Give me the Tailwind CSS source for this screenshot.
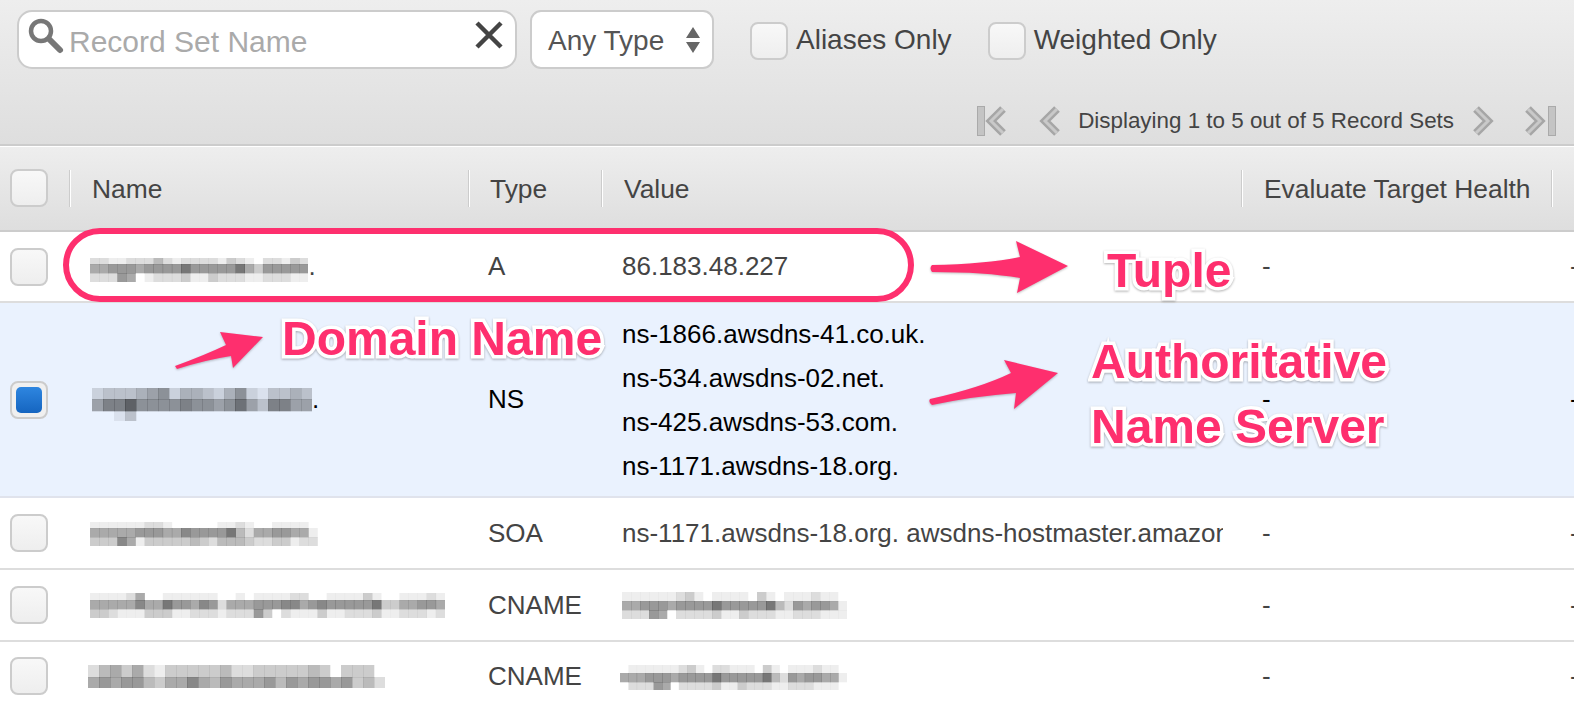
<!DOCTYPE html>
<html lang="en">
<head>
    <meta charset="UTF-8">
    <title>Record Sets</title>
    <script src="https://cdn.jsdelivr.net/npm/@tailwindcss/browser@4"></script>
</head>
<body class="relative w-screen h-screen overflow-hidden bg-white text-[#444] font-['Liberation_Sans',Arial,sans-serif] flex flex-col">

    <!-- Toolbar -->
    <div class="h-[146px] shrink-0 flex flex-col border-b-2 border-[#ccc] bg-gradient-to-b from-[#eeeeee] to-[#dedede]">
        <div class="flex items-start pt-[10px] pl-[17px]">
            <div class="relative w-[500px] h-[59px] bg-white border-2 border-[#ccc] rounded-[15px] flex items-center pl-[50px] pr-[12px]">
                <svg class="absolute left-[8px] top-[5px]" width="38" height="38" viewBox="0 0 38 38" fill="none">
                    <circle cx="14" cy="14" r="10" stroke="#777" stroke-width="4.5"/>
                    <path d="M22 22 L33 33" stroke="#777" stroke-width="6" stroke-linecap="round"/>
                </svg>
                <span class="text-[30px] text-[#aaa] mt-[3px] flex-1">Record Set Name</span>
                <svg class="mb-[9px]" width="28" height="28" viewBox="0 0 28 28" fill="none">
                    <path d="M2 2 L26 26 M26 2 L2 26" stroke="#444" stroke-width="4.5"/>
                </svg>
            </div>
            <div class="ml-[13px] w-[184px] h-[59px] bg-white border-2 border-[#ccc] rounded-[11px] flex items-center pl-[16px] pr-[12px] justify-between">
                <span class="text-[28px] text-[#555] mt-[2px]">Any Type</span>
                <svg width="14" height="26" viewBox="0 0 14 26" fill="#666">
                    <path d="M7 0 L14 11 L0 11 Z M0 15 L14 15 L7 26 Z"/>
                </svg>
            </div>
            <div class="ml-[36px] mt-[11px] flex items-center">
                <div class="w-[38px] h-[38px] rounded-[8px] border-2 border-[#ccc] bg-gradient-to-b from-[#f8f8f8] to-[#eee]"></div>
                <span class="ml-[8px] -mt-[2px] text-[28px]">Aliases Only</span>
            </div>
            <div class="ml-[36px] mt-[11px] flex items-center">
                <div class="w-[38px] h-[38px] rounded-[8px] border-2 border-[#ccc] bg-gradient-to-b from-[#f8f8f8] to-[#eee]"></div>
                <span class="ml-[8px] -mt-[2px] text-[28px]">Weighted Only</span>
            </div>
        </div>
        <div class="mt-auto mb-[6px] pr-[18px] flex items-center justify-end">
            <svg width="30" height="30" viewBox="0 0 30 30" fill="none">
                <rect x="0.5" y="0.5" width="7" height="29" fill="#c4c4c4" stroke="#aaa"/>
                <path d="M26 3 L14 15 L26 27" stroke="#a6a6a6" stroke-width="8"/>
                <path d="M26 3 L14 15 L26 27" stroke="#c9c9c9" stroke-width="3"/>
            </svg>
            <svg class="ml-[32px]" width="22" height="30" viewBox="0 0 22 30" fill="none">
                <path d="M18 3 L6 15 L18 27" stroke="#a6a6a6" stroke-width="8"/>
                <path d="M18 3 L6 15 L18 27" stroke="#c9c9c9" stroke-width="3"/>
            </svg>
            <span class="ml-[17px] text-[22.4px]">Displaying 1 to 5 out of 5 Record Sets</span>
            <svg class="ml-[18px]" width="22" height="30" viewBox="0 0 22 30" fill="none">
                <path d="M4 3 L16 15 L4 27" stroke="#a6a6a6" stroke-width="8"/>
                <path d="M4 3 L16 15 L4 27" stroke="#c9c9c9" stroke-width="3"/>
            </svg>
            <svg class="ml-[30px]" width="32" height="30" viewBox="0 0 32 30" fill="none">
                <path d="M4 3 L16 15 L4 27" stroke="#a6a6a6" stroke-width="8"/>
                <path d="M4 3 L16 15 L4 27" stroke="#c9c9c9" stroke-width="3"/>
                <rect x="24.5" y="0.5" width="7" height="29" fill="#c4c4c4" stroke="#aaa"/>
            </svg>
        </div>
    </div>

    <!-- Table header -->
    <div class="h-[86px] shrink-0 grid grid-cols-[69px_399px_133px_640px_310px_1fr] items-center border-b-2 border-[#ccc] bg-gradient-to-b from-[#eeeeee] to-[#dedede] text-[26.4px] shadow-[inset_0_1px_0_white]">
        <div class="pl-[10px]"><div class="w-[38px] h-[38px] rounded-[8px] border-2 border-[#ccc] bg-gradient-to-b from-[#f8f8f8] to-[#eee]"></div></div>
        <div class="h-[37px] flex items-center pt-[4px] pl-[22px] border-l border-[#ccc] shadow-[inset_1px_0_0_white]">Name</div>
        <div class="h-[37px] flex items-center pt-[4px] pl-[21px] border-l border-[#ccc] shadow-[inset_1px_0_0_white]">Type</div>
        <div class="h-[37px] flex items-center pt-[4px] pl-[22px] border-l border-[#ccc] shadow-[inset_1px_0_0_white]">Value</div>
        <div class="h-[37px] flex items-center pt-[4px] pl-[22px] border-l border-[#ccc] shadow-[inset_1px_0_0_white] whitespace-nowrap">Evaluate Target Health</div>
        <div class="h-[37px] border-l border-[#ccc] shadow-[inset_1px_0_0_white]"></div>
    </div>

    <!-- Rows -->
    <div class="h-[71px] shrink-0 grid grid-cols-[70px_398px_133px_640px_311px_1fr] items-center border-b-2 border-[#ddd] text-[26px]">
        <div class="pl-[10px]"><div class="w-[38px] h-[38px] rounded-[8px] border-2 border-[#ccc] bg-gradient-to-b from-[#f8f8f8] to-[#eee]"></div></div>
        <div class="pl-[20px] flex items-center">
            <svg class="pixels translate-y-[3px]" data-rows="ddeedddbdeddddecdefddecd|aa999a99997999997ac99999|ddd9afedddceecdddeedddee" data-heights="6,9,9" data-cell="9.1"></svg><span>.</span>
        </div>
        <div class="pl-[20px]">A</div>
        <div class="pl-[21px]">86.183.48.227</div>
        <div class="pl-[21px]">-</div>
        <div class="pl-[18px]">-</div>
    </div>

    <div class="h-[195px] shrink-0 grid grid-cols-[70px_398px_133px_640px_311px_1fr] items-center border-b-2 border-[#e0e3ec] bg-[#eaf2fe] text-black text-[26px]">
        <div class="pl-[10px]">
            <div class="w-[38px] h-[38px] rounded-[8px] border-2 border-[#ccc] bg-[#f0f0f0] flex items-center justify-center">
                <div class="w-[26px] h-[26px] rounded-[5px] bg-gradient-to-b from-[#2e86e0] to-[#1565c0]"></div>
            </div>
        </div>
        <div class="pl-[22px] flex items-center">
            <svg class="pixels translate-y-[5px]" data-rows="dcccba9dbbcdb9deccbc|a8869999899a97ac88aa|ffecffffffffffffffff" data-heights="11,12,10" data-cell="11"></svg><span>.</span>
        </div>
        <div class="pl-[20px]">NS</div>
        <div class="pl-[21px] leading-[44px]">
            <div>ns-1866.awsdns-41.co.uk.</div>
            <div>ns-534.awsdns-02.net.</div>
            <div>ns-425.awsdns-53.com.</div>
            <div>ns-1171.awsdns-18.org.</div>
        </div>
        <div class="pl-[21px]">-</div>
        <div class="pl-[18px]">-</div>
    </div>

    <div class="h-[72px] shrink-0 grid grid-cols-[70px_398px_133px_640px_311px_1fr] items-center border-b-2 border-[#ddd] text-[26px]">
        <div class="pl-[10px]"><div class="w-[38px] h-[38px] rounded-[8px] border-2 border-[#ccc] bg-gradient-to-b from-[#f8f8f8] to-[#eee]"></div></div>
        <div class="pl-[20px]">
            <svg class="pixels translate-y-[1px]" data-rows="eeeeeeddefffffeedeffeeeef|aaaaa999aa899997bdaa99aae|ccc8aecccccbcdbbbcddccedd" data-heights="6,9,9" data-cell="9.1"></svg>
        </div>
        <div class="pl-[20px]">SOA</div>
        <div class="pl-[21px]"><div class="w-[601px] overflow-hidden whitespace-nowrap">ns-1171.awsdns-18.org. awsdns-hostmaster.amazon.com. 1 7200 900 1209600 86400</div></div>
        <div class="pl-[21px]">-</div>
        <div class="pl-[18px]">-</div>
    </div>

    <div class="h-[72px] shrink-0 grid grid-cols-[70px_398px_133px_640px_311px_1fr] items-center border-b-2 border-[#ddd] text-[26px]">
        <div class="pl-[10px]"><div class="w-[38px] h-[38px] rounded-[8px] border-2 border-[#ccc] bg-gradient-to-b from-[#f8f8f8] to-[#eee]"></div></div>
        <div class="pl-[20px]">
            <svg class="pixels" data-rows="eeeedaffeeeeeeffefeeeeddffeeeeceffeeede|aaaaa8aa799a89daaa99988a98999997ccaa99a|ccdeeeccceedddeddd9cfdeeeceedddceeddded" data-heights="7,9,9" data-cell="9.1"></svg>
        </div>
        <div class="pl-[20px]">CNAME</div>
        <div class="pl-[21px]">
            <svg class="pixels" data-rows="eeeeeedcefeeeefcefeeedee|aa999a99997999997bd9a99ae|ddd9afddddceecdddeedddeee" data-heights="9,9,9" data-cell="9"></svg>
        </div>
        <div class="pl-[21px]">-</div>
        <div class="pl-[18px]">-</div>
    </div>

    <div class="flex-1 grid grid-cols-[70px_398px_133px_640px_311px_1fr] items-center text-[26px]">
        <div class="pl-[10px]"><div class="w-[38px] h-[38px] rounded-[8px] border-2 border-[#ccc] bg-gradient-to-b from-[#f8f8f8] to-[#eee]"></div></div>
        <div class="pl-[18px]">
            <svg class="pixels" data-rows="dbacadecccccbddcccccbcfcccf|a9a99bcaa8ab9aaa9b9a99a9cbd" data-heights="12,11" data-cell="11"></svg>
        </div>
        <div class="pl-[20px]">CNAME</div>
        <div class="pl-[19px]">
            <svg class="pixels translate-y-[1px]" data-rows="feeeeeedcefddeeefcefeeedee|aaa999a99997999997bd9a99aae|fddd9afddddceecdddeedddeee" data-heights="8,9,8" data-cell="8.4"></svg>
        </div>
        <div class="pl-[21px]">-</div>
        <div class="pl-[18px]">-</div>
    </div>

    <!-- Annotations drawn on top of the screenshot -->
    <div class="absolute left-[63px] top-[228px] w-[851px] h-[74px] border-[6px] border-[#fe2f6e] rounded-[37px]"></div>

    <svg class="absolute left-0 top-0 pointer-events-none drop-shadow-[0_1px_1px_rgba(0,0,0,0.25)]" width="1574" height="710" fill="#fe2f6e">
        <path d="M932 265 Q985 264 1020 257 L1016 241 L1068 266 L1017 293 L1020 278 Q985 272 932 272 Q929 268 932 265 Z"/>
        <path d="M930 399 Q980 388 1011 373 L1004 360 L1058 373 L1014 409 L1016 393 Q975 396 932 405 Q928 402 930 399 Z"/>
        <path d="M175 366 Q205 355 226 345 L220 332 L263 337 L233 368 L231 356 Q205 360 177 369 Z"/>
    </svg>

    <div class="absolute left-[1107px] top-[247px] text-[48px] leading-[48px] font-bold text-[#fe2f6e] whitespace-nowrap [-webkit-text-stroke:7px_white] [paint-order:stroke_fill] drop-shadow-[0_1px_1px_rgba(0,0,0,0.3)]">Tuple</div>
    <div class="absolute left-[282px] top-[315px] text-[48px] leading-[48px] font-bold text-[#fe2f6e] whitespace-nowrap [-webkit-text-stroke:7px_white] [paint-order:stroke_fill] drop-shadow-[0_1px_1px_rgba(0,0,0,0.3)]">Domain Name</div>
    <div class="absolute left-[1091px] top-[329px] text-[48px] leading-[65px] font-bold text-[#fe2f6e] whitespace-nowrap [-webkit-text-stroke:7px_white] [paint-order:stroke_fill] drop-shadow-[0_1px_1px_rgba(0,0,0,0.3)]">Authoritative<br>Name Server</div>

<script>
// Redacted names: each hex digit is one mosaic cell (0 = black, f = clear)
document.querySelectorAll('.pixels').forEach(svg => {
    const rows = svg.dataset.rows.split('|');
    const heights = svg.dataset.heights.split(',').map(Number);
    const cell = Number(svg.dataset.cell);
    const longest = Math.max(...rows.map(r => r.length));
    svg.setAttribute('width', longest * cell);
    svg.setAttribute('height', heights.reduce((a, b) => a + b, 0));
    let y = 0;
    rows.forEach((row, i) => {
        [...row].forEach((ch, j) => {
            const rect = document.createElementNS('http://www.w3.org/2000/svg', 'rect');
            rect.setAttribute('x', j * cell);
            rect.setAttribute('y', y);
            rect.setAttribute('width', cell + 0.3);
            rect.setAttribute('height', heights[i] + 0.3);
            rect.setAttribute('fill-opacity', (15 - parseInt(ch, 16)) / 15);
            svg.appendChild(rect);
        });
        y += heights[i];
    });
});
</script>
</body>
</html>
